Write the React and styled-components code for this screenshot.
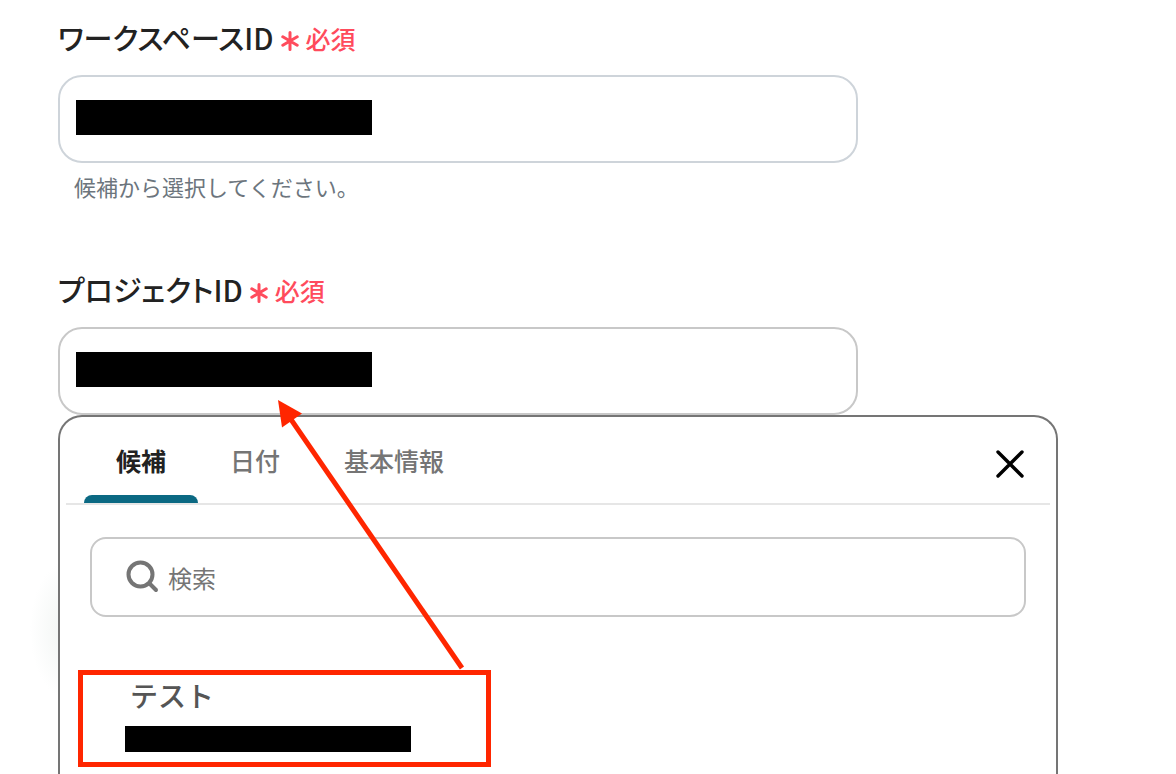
import { useState } from 'react'
import styled, { createGlobalStyle } from 'styled-components'

const palette = {
  text: '#222222',
  sub: '#757575',
  helper: '#6c757d',
  border: '#c8c8c8',
  fieldBorder: '#ced4da',
  line: '#e6e6e6',
  teal: '#0b6983',
  required: '#ff4b5c',
  mark: '#ff2600',
}

const GlobalStyle = createGlobalStyle`
  * {
    box-sizing: border-box;
  }
  body {
    margin: 0;
    background: #fff;
    color: ${palette.text};
    font-family: 'Noto Sans CJK JP', sans-serif;
  }
  button, input {
    font-family: inherit;
  }
`

const Page = styled.main`
  position: relative;
  display: flex;
  flex-direction: column;
  min-height: 100vh;
  max-width: 1116px;
  padding: 15px 58px 0;
`

const Field = styled.div`
  width: 80%;
`

const Label = styled.label`
  display: flex;
  align-items: center;
  gap: 7px;
  margin-bottom: 16px;
  font-size: 29px;
  font-weight: 500;
  line-height: 42px;
  font-feature-settings: 'palt';
`

const Required = styled.span`
  display: flex;
  align-items: center;
  gap: 7px;
  padding-top: 2px;
  color: ${palette.required};
  font-size: 25px;
  font-weight: 500;
  font-feature-settings: normal;
  svg {
    margin-top: 6px;
  }
`

const FieldBox = styled.div`
  display: flex;
  align-items: center;
  height: 88px;
  padding: 0 16px 4px;
  border: 2px solid ${(props) => props.$color};
  border-radius: 24px;
`

const Mask = styled.span`
  flex: none;
  width: ${(props) => props.$width}px;
  height: ${(props) => props.$height}px;
  background: #000;
`

const BareInput = styled.input`
  flex: 1;
  min-width: 0;
  padding: 0;
  border: none;
  outline: none;
  background: none;
  color: ${palette.text};
  font-size: 24px;
  &::placeholder {
    color: ${palette.sub};
    opacity: 1;
  }
`

const Helper = styled.p`
  margin: 8px 0 66px;
  padding-left: 16px;
  color: ${palette.helper};
  font-size: 22px;
  line-height: 30px;
`

const Panel = styled.section`
  position: relative;
  flex: 1;
  padding-bottom: 7px;
  border: 2px solid ${palette.sub};
  border-bottom: none;
  border-radius: 24px 24px 0 0;
  background: #fff;
`

/* パネルの後ろに薄く見える影 */
const Glow = styled.div`
  position: absolute;
  left: 30px;
  top: 560px;
  width: 80px;
  height: 140px;
  background: radial-gradient(closest-side, #f0f4f2, #fff);
`

const TabBar = styled.div`
  display: flex;
  align-items: stretch;
  height: 88px;
  margin: 0 6px;
  padding: 0 18px;
  border-bottom: 2px solid ${palette.line};
`

const Tab = styled.button`
  position: relative;
  padding: 0 32px;
  border: none;
  background: none;
  color: ${(props) => (props.$active ? palette.text : palette.sub)};
  font-size: 25px;
  font-weight: ${(props) => (props.$active ? 700 : 500)};
  cursor: pointer;
  &::after {
    content: '';
    position: absolute;
    left: 0;
    right: 0;
    bottom: 0;
    height: 8px;
    border-radius: 8px 8px 0 0;
    background: ${(props) => (props.$active ? palette.teal : 'transparent')};
  }
`

const CloseButton = styled.button`
  display: flex;
  align-items: center;
  margin-left: auto;
  padding: 8px 6px 0;
  border: none;
  background: none;
  color: #000;
  cursor: pointer;
`

const SearchBox = styled.label`
  display: flex;
  align-items: center;
  gap: 8px;
  height: 80px;
  margin: 32px 30px 53px;
  padding: 0 34px;
  border: 2px solid ${palette.border};
  border-radius: 16px;
`

const Option = styled.button`
  display: flex;
  flex-direction: column;
  align-items: flex-start;
  gap: 11px;
  width: 413px;
  max-width: 90%;
  margin-left: 18px;
  padding: 0 0 10px 42px;
  border: 5px solid ${palette.mark};
  background: none;
  cursor: pointer;
`

const OptionName = styled.span`
  padding-left: 5px;
  color: #555;
  font-size: 28px;
  font-weight: 500;
  line-height: 40px;
`

const Arrow = styled.svg`
  position: absolute;
  left: 270px;
  top: 395px;
  pointer-events: none;
`

const RequiredMark = () => (
  <Required>
    <svg width="18" height="20" viewBox="0 0 18 20" aria-hidden="true">
      <path
        d="M9 1.5v17M1.8 5.8l14.4 8.4M16.2 5.8L1.8 14.2"
        stroke="currentColor"
        strokeWidth="3"
        strokeLinecap="round"
      />
    </svg>
    必須
  </Required>
)

const SearchIcon = () => (
  <svg width="34" height="34" viewBox="0 0 34 34" fill="none" aria-hidden="true">
    <g stroke={palette.sub} strokeWidth="4" strokeLinecap="round">
      <circle cx="14.5" cy="14.5" r="12" />
      <path d="M23.5 23.5L30 30" />
    </g>
  </svg>
)

const MaskedField = ({ id, label, color }) => (
  <Field>
    <Label htmlFor={id}>
      {label}
      <RequiredMark />
    </Label>
    <FieldBox $color={color}>
      <Mask $width={296} $height={35} />
      <BareInput id={id} type="text" />
    </FieldBox>
  </Field>
)

const tabs = ['候補', '日付', '基本情報']

const App = () => {
  const [active, setActive] = useState(tabs[0])

  return (
    <Page>
      <GlobalStyle />
      <MaskedField
        id="workspace"
        label="ワークスペースID"
        color={palette.fieldBorder}
      />
      <Helper>候補から選択してください。</Helper>
      <MaskedField id="project" label="プロジェクトID" color={palette.border} />
      <Glow />
      <Panel>
        <TabBar>
          {tabs.map((tab) => (
            <Tab
              key={tab}
              type="button"
              $active={tab === active}
              onClick={() => setActive(tab)}
            >
              {tab}
            </Tab>
          ))}
          <CloseButton type="button" aria-label="閉じる">
            <svg width="32" height="32" viewBox="0 0 32 32" aria-hidden="true">
              <path
                d="M4 4l24 24M28 4L4 28"
                stroke="currentColor"
                strokeWidth="3.4"
                strokeLinecap="round"
              />
            </svg>
          </CloseButton>
        </TabBar>
        <SearchBox>
          <SearchIcon />
          <BareInput type="text" placeholder="検索" aria-label="検索" />
        </SearchBox>
        <Option type="button">
          <OptionName>テスト</OptionName>
          <Mask $width={286} $height={26} />
        </Option>
      </Panel>
      <Arrow width="200" height="280" viewBox="0 0 200 280" aria-hidden="true">
        <path d="M20 23L192 273" stroke={palette.mark} strokeWidth="5" />
        <path d="M8 5L32 18.500L12 32.500Z" fill={palette.mark} />
      </Arrow>
    </Page>
  )
}

export default App
